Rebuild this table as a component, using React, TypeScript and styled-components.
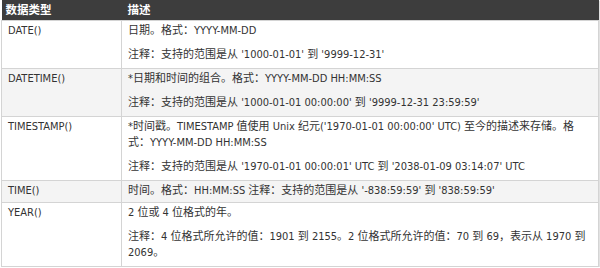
import styled, { createGlobalStyle } from "styled-components";

const GlobalStyle = createGlobalStyle`
  body {
    margin: 0;
    background: #ffffff;
    font-family: "DejaVu Sans Condensed", "DejaVu Sans", Verdana, "Noto Sans CJK SC", sans-serif;
    font-size: 11px;
    color: #333333;
  }
`;

const Wrapper = styled.div`
  padding-left: 1px;
  width: 598px;
`;

const Table = styled.table`
  width: 598px;
  border-collapse: collapse;
  table-layout: fixed;
  box-shadow: 1px 1px 1px #e2e2e2;
`;

const HeadCell = styled.th<{ $width?: number }>`
  width: ${(p) => (p.$width ? `${p.$width}px` : "auto")};
  background: #3d3d3d;
  color: #ffffff;
  font-weight: bold;
  font-size: 11.5px;
  text-align: left;
  line-height: 16px;
  height: 20px;
  padding: 2px 6px 2px 4px;
  box-sizing: border-box;
  &:last-child {
    padding-left: 6px;
  }
`;

const Row = styled.tr<{ $alt?: boolean }>`
  background: ${(p) => (p.$alt ? "#f4f4f4" : "#ffffff")};
`;

const Cell = styled.td`
  border: 1px solid #d4d4d4;
  padding: 2px 6px 3px;
  line-height: 16px;
  vertical-align: top;
`;

const Para = styled.p`
  margin: 0 0 8px;
  &:last-child {
    margin-bottom: 2px;
  }
`;

type DataRow = {
  type: string;
  lines: string[];
  plain?: boolean;
};

const rows: DataRow[] = [
  {
    type: "DATE()",
    lines: [
      "日期。格式：YYYY-MM-DD",
      "注释：支持的范围是从 '1000-01-01' 到 '9999-12-31'",
    ],
  },
  {
    type: "DATETIME()",
    lines: [
      "*日期和时间的组合。格式：YYYY-MM-DD HH:MM:SS",
      "注释：支持的范围是从 '1000-01-01 00:00:00' 到 '9999-12-31 23:59:59'",
    ],
  },
  {
    type: "TIMESTAMP()",
    lines: [
      "*时间戳。TIMESTAMP 值使用 Unix 纪元('1970-01-01 00:00:00' UTC) 至今的描述来存储。格式：YYYY-MM-DD HH:MM:SS",
      "注释：支持的范围是从 '1970-01-01 00:00:01' UTC 到 '2038-01-09 03:14:07' UTC",
    ],
  },
  {
    type: "TIME()",
    lines: ["时间。格式：HH:MM:SS 注释：支持的范围是从 '-838:59:59' 到 '838:59:59'"],
    plain: true,
  },
  {
    type: "YEAR()",
    lines: [
      "2 位或 4 位格式的年。",
      "注释：4 位格式所允许的值：1901 到 2155。2 位格式所允许的值：70 到 69，表示从 1970 到 2069。",
    ],
  },
];

export default function App() {
  return (
    <>
      <GlobalStyle />
      <Wrapper>
        <Table>
          <thead>
            <tr>
              <HeadCell $width={120}>数据类型</HeadCell>
              <HeadCell>描述</HeadCell>
            </tr>
          </thead>
          <tbody>
            {rows.map((r, i) => (
              <Row key={r.type} $alt={i % 2 === 1}>
                <Cell>{r.type}</Cell>
                <Cell>
                  {r.plain
                    ? r.lines[0]
                    : r.lines.map((l) => <Para key={l}>{l}</Para>)}
                </Cell>
              </Row>
            ))}
          </tbody>
        </Table>
      </Wrapper>
    </>
  );
}
